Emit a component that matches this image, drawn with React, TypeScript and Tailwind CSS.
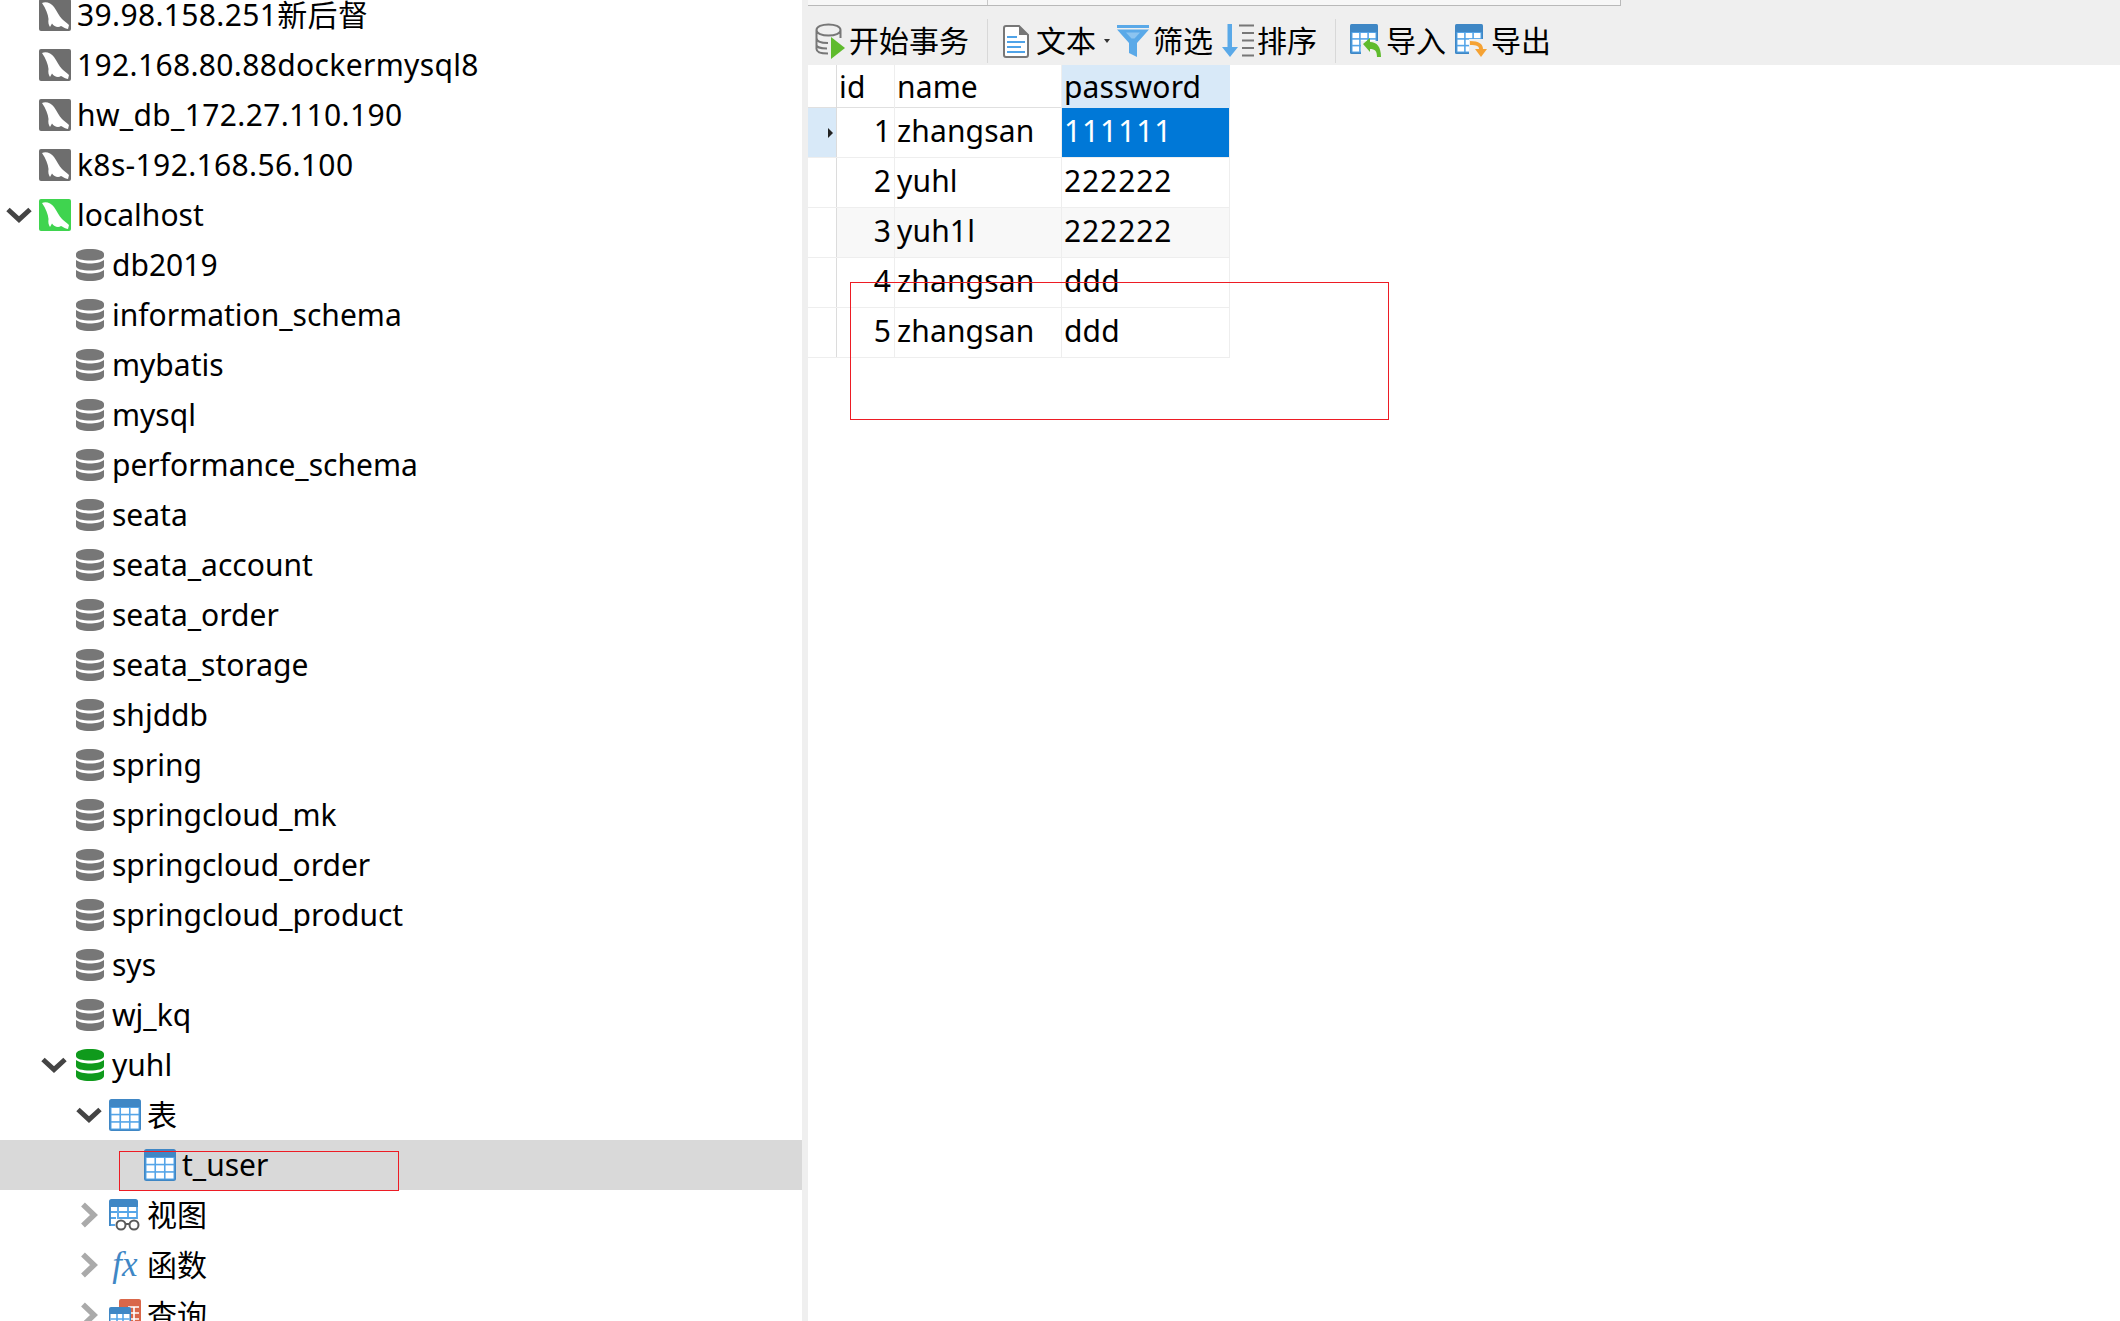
import { ReactNode } from "react"

const font = "[font-family:'Noto_Sans','Noto_Sans_CJK_SC',sans-serif]"

function Dolphin({ on }: { on?: boolean }) {
  return (
    <svg width="32" height="32" viewBox="0 0 32 32" className="shrink-0">
      <rect width="32" height="32" rx="2" fill={on ? "#3fd44f" : "#6e6e6e"} />
      <path
        d="M3 4C7 2 12 4 15 8C18 12 20 17 23 20C25 22 28 24 30 26L29 30C26 29.500 24 28 22 27C19 29 15 27.500 13 24.500L11 28C9.500 26 9 23 9.500 20C9 15 7 10 3 4Z"
        fill="#fff"
      />
    </svg>
  )
}

function DbIcon({ color = "#777777" }: { color?: string }) {
  return (
    <svg width="32" height="32" viewBox="-2 0 32 32" className="shrink-0">
      <path d="M0 5C0 2 6 0 14 0S28 2 28 5V7C28 10 22 11.500 14 11.500S0 10 0 7Z" fill={color} />
      <path d="M0 11C3 13.500 9 14.500 14 14.500S25 13.500 28 11V17C28 20 22 21.500 14 21.500S0 20 0 17Z" fill={color} />
      <path d="M0 21C3 23.500 9 24.500 14 24.500S25 23.500 28 21V27C28 30 22 32 14 32S0 30 0 27Z" fill={color} />
    </svg>
  )
}

function GridCells({ x, y, w, h }: { x: number; y: number; w: number; h: number }) {
  // three by three white cells on the blue sheet
  const cw = (w - 2 * 1.6) / 3
  const ch = (h - 2 * 1.6) / 3
  const cells = []
  for (let r = 0; r < 3; r++) {
    for (let c = 0; c < 3; c++) {
      cells.push(<rect key={`${r}-${c}`} x={x + c * (cw + 1.6)} y={y + r * (ch + 1.6)} width={cw} height={ch} fill="#fff" />)
    }
  }
  return <>{cells}</>
}

function TableIcon() {
  return (
    <svg width="32" height="32" viewBox="0 0 32 32" className="shrink-0">
      <rect width="32" height="32" rx="2.500" fill="#3f87c5" />
      <rect x="1.500" y="8" width="29" height="22.500" fill="#55a5e8" />
      <GridCells x={2.5} y={9} w={27} h={20.5} />
    </svg>
  )
}

function ViewIcon() {
  return (
    <svg width="32" height="32" viewBox="0 0 32 32" className="shrink-0">
      <path d="M0 2.500A2.500 2.500 0 0 1 2.500 0H26.500A2.500 2.500 0 0 1 29 2.500V8H0Z" fill="#3f87c5" />
      <path d="M1 8V26H6M10 13H28M10 19H28M1 13H8M1 19H7M9 8V20M19 8V20M28 8V20" stroke="#55a5e8" strokeWidth="1.800" fill="none" />
      <rect x="0" y="8" width="1.800" height="19" fill="#3f87c5" />
      <circle cx="12" cy="26" r="4.500" fill="#fff" stroke="#5a5a5a" strokeWidth="2" />
      <circle cx="25" cy="26" r="4.500" fill="#fff" stroke="#5a5a5a" strokeWidth="2" />
      <path d="M16 25H21" stroke="#5a5a5a" strokeWidth="2" />
    </svg>
  )
}

function QueryIcon() {
  return (
    <svg width="32" height="32" viewBox="0 0 32 32" className="shrink-0">
      <rect x="10" y="0" width="22" height="32" rx="2" fill="#d9674a" />
      <path d="M19 8H30M19 14H30M19 20H30M25 8V32" stroke="#fff" strokeWidth="1.600" fill="none" />
      <rect x="0" y="8" width="22" height="24" rx="2" fill="#3f87c5" />
      <path d="M1.500 15H20.500V32H1.500Z" fill="#fff" />
      <path d="M1.500 20H20.500M1.500 25H20.500M8 15V32M14 15V32" stroke="#55a5e8" strokeWidth="1.600" fill="none" />
    </svg>
  )
}

function FxIcon() {
  return (
    <span className="w-[32px] shrink-0 text-center text-[#3f87c5] italic text-[35px] leading-[32px] whitespace-nowrap [font-family:'Liberation_Serif',serif]">
      fx
    </span>
  )
}

function ChevronDown() {
  return (
    <svg width="26" height="16" viewBox="0 0 26 16">
      <path d="M2 2.500L13 12.500L24 2.500" stroke="#444444" strokeWidth="5" fill="none" />
    </svg>
  )
}

function ChevronRight() {
  return (
    <svg width="18" height="26" viewBox="0 0 18 26">
      <path d="M3 2.500L14 13L3 23.500" stroke="#aaaaaa" strokeWidth="5.500" fill="none" />
    </svg>
  )
}

const depthPad = ["pl-[4px]", "pl-[39px]", "pl-[74px]", "pl-[109px]"]

function TreeRow({
  depth,
  arrow,
  icon,
  label,
  selected,
  numeric,
}: {
  depth: number
  arrow?: "open" | "closed"
  icon: ReactNode
  label: string
  selected?: boolean
  numeric?: boolean
}) {
  return (
    <div className={`relative flex h-[50px] items-center ${depthPad[depth]} ${selected ? "bg-[#d9d9d9]" : ""}`}>
      <span className="flex w-[35px] shrink-0 items-center justify-center pr-[6px]">
        {arrow === "open" && <ChevronDown />}
        {arrow === "closed" && <ChevronRight />}
      </span>
      {icon}
      <span className={`ml-[6px] whitespace-nowrap text-[30px] leading-[50px] text-black ${numeric ? "tracking-[0.35px]" : "tracking-[0px]"}`}>
        {label}
      </span>
      {selected && <div className="absolute left-[119px] top-[11px] h-[40px] w-[280px] border border-[#ed1c24]" />}
    </div>
  )
}

const connections = ["39.98.158.251新后督", "192.168.80.88dockermysql8", "hw_db_172.27.110.190", "k8s-192.168.56.100"]

const databases = [
  "db2019",
  "information_schema",
  "mybatis",
  "mysql",
  "performance_schema",
  "seata",
  "seata_account",
  "seata_order",
  "seata_storage",
  "shjddb",
  "spring",
  "springcloud_mk",
  "springcloud_order",
  "springcloud_product",
  "sys",
  "wj_kq",
]

function Tree() {
  return (
    <div className="w-[802px] shrink-0 -mt-[10px] bg-white">
      {connections.map((c) => (
        <TreeRow key={c} depth={0} icon={<Dolphin />} label={c} numeric />
      ))}
      <TreeRow depth={0} arrow="open" icon={<Dolphin on />} label="localhost" />
      {databases.map((d) => (
        <TreeRow key={d} depth={1} icon={<DbIcon />} label={d} />
      ))}
      <TreeRow depth={1} arrow="open" icon={<DbIcon color="#0f9a1c" />} label="yuhl" />
      <TreeRow depth={2} arrow="open" icon={<TableIcon />} label="表" />
      <TreeRow depth={3} icon={<TableIcon />} label="t_user" selected />
      <TreeRow depth={2} arrow="closed" icon={<ViewIcon />} label="视图" />
      <TreeRow depth={2} arrow="closed" icon={<FxIcon />} label="函数" />
      <TreeRow depth={2} arrow="closed" icon={<QueryIcon />} label="查询" />
    </div>
  )
}

function TxIcon() {
  return (
    <svg width="30" height="36" viewBox="0 0 30 36" className="shrink-0">
      <path d="M1.500 7V26C1.500 29 6 30.500 13 30.500M1.500 7C1.500 3.500 7 1.500 13.500 1.500S25.500 3.500 25.500 7V15M1.500 7C1.500 10.500 7 12.500 13.500 12.500S25.500 10.500 25.500 7M1.500 15C1.500 18 6 20 13 20M1.500 22C1.500 24 6 25.500 12 25.500" stroke="#777777" strokeWidth="2" fill="none" />
      <path d="M16 14L30 25L16 36Z" fill="#5fbb2d" />
    </svg>
  )
}

function DocIcon() {
  return (
    <svg width="26" height="33" viewBox="0 0 26 33" className="shrink-0">
      <path d="M1 3A2 2 0 0 1 3 1H16L25 10V30A2 2 0 0 1 23 32H3A2 2 0 0 1 1 30Z" fill="#fff" stroke="#777777" strokeWidth="2" />
      <path d="M16 1V10H25Z" fill="#777777" />
      <path d="M4 12H14M4 17H22M4 22H18M4 27H22" stroke="#4fa3e8" strokeWidth="2.200" />
    </svg>
  )
}

function FilterIcon() {
  return (
    <svg width="32" height="32" viewBox="0 0 32 32" className="shrink-0">
      <path d="M0 0H32V3H0Z" fill="#5aa9e8" />
      <path d="M0 4.500H32L20 18V32L12 28V18Z" fill="#5aa9e8" />
      <path d="M9 7.500H23L17.500 13.500H14.500Z" fill="#8cc4f0" />
    </svg>
  )
}

function SortIcon() {
  return (
    <svg width="33" height="34" viewBox="0 0 33 34" className="shrink-0">
      <path d="M5.500 0H10V23H16L8 33L0 23H5.500Z" fill="#5aa9e8" />
      <path d="M17 1.500H32M20 9H32M20 16.500H32M20 24H32M20 31.500H32" stroke="#777777" strokeWidth="2" />
    </svg>
  )
}

function SheetArrowIcon({ kind }: { kind: "in" | "out" }) {
  return (
    <svg width="32" height="34" viewBox="0 0 32 34" className="shrink-0">
      <rect width="28" height="30" rx="1.500" fill="#3f87c5" />
      <rect x="1.500" y="8" width="25" height="20.500" fill="#55a5e8" />
      <GridCells x={2.5} y={9} w={23} h={18.5} />
      {kind === "in" ? (
        <>
          <rect x="11" y="17" width="21" height="17" fill="#efefef" />
          <path d="M13 20L20 14V18C27 18 31 23 31 33H27C27 27 25 25 20 25V28Z" fill="#5fbb2d" />
        </>
      ) : (
        <>
          <rect x="14" y="15" width="18" height="19" fill="#efefef" />
          <path d="M15 17V21C22 21 24 22 24 25H20L26 33L32 25H28C28 20 24 17 15 17Z" fill="#f5a233" />
        </>
      )}
    </svg>
  )
}

function ToolLabel({ children }: { children: string }) {
  return <span className="ml-[4px] whitespace-nowrap text-[30px] leading-[40px] text-black">{children}</span>
}

function ToolSep() {
  return <div className="h-[44px] w-px bg-[#d8d8d8]" />
}

function Toolbar() {
  return (
    <div className="flex h-[59px] items-center bg-[#efefef] pl-[7px] pt-[11px]">
      <TxIcon />
      <ToolLabel>开始事务</ToolLabel>
      <span className="ml-[18px]">
        <ToolSep />
      </span>
      <span className="ml-[15px]">
        <DocIcon />
      </span>
      <span className="ml-[3px]">
        <ToolLabel>文本</ToolLabel>
      </span>
      <svg width="6" height="4" viewBox="0 0 6 4" className="ml-[8px] mr-[7px] shrink-0">
        <path d="M0 0H6L3 4Z" fill="#333333" />
      </svg>
      <FilterIcon />
      <ToolLabel>筛选</ToolLabel>
      <span className="ml-[9px]">
        <SortIcon />
      </span>
      <span className="-ml-[2px]">
        <ToolLabel>排序</ToolLabel>
      </span>
      <span className="ml-[18px]">
        <ToolSep />
      </span>
      <span className="ml-[14px]">
        <SheetArrowIcon kind="in" />
      </span>
      <ToolLabel>导入</ToolLabel>
      <span className="ml-[9px]">
        <SheetArrowIcon kind="out" />
      </span>
      <ToolLabel>导出</ToolLabel>
    </div>
  )
}

const users = [
  { id: 1, name: "zhangsan", password: "111111" },
  { id: 2, name: "yuhl", password: "222222" },
  { id: 3, name: "yuh1l", password: "222222" },
  { id: 4, name: "zhangsan", password: "ddd" },
  { id: 5, name: "zhangsan", password: "ddd" },
]

function DataGrid() {
  const cols = "grid grid-cols-[29px_58px_167px_168px] w-[422px]"
  return (
    <div className="text-[30px] tracking-[0.15px] text-black">
      <div className={`${cols} h-[43px] border-b border-[#e0e0e0] leading-[44px]`}>
        <div className="border-r border-[#dcdcdc]" />
        <div className="border-r border-[#eeeeee] pl-[2px]">id</div>
        <div className="border-r border-[#eeeeee] pl-[2px]">name</div>
        <div className="bg-[#d8e9f8] pl-[2px]">password</div>
      </div>
      {users.map((u, i) => (
        <div key={u.id} className={`${cols} h-[50px] border-b border-[#eeeeee] leading-[46px] ${i === 2 ? "bg-[#f8f8f8]" : ""}`}>
          <div className={`flex items-center justify-end border-r border-[#dcdcdc] pr-[3px] ${i === 0 ? "bg-[#d8e9f8]" : "bg-white"}`}>
            {i === 0 && (
              <svg width="5" height="10" viewBox="0 0 5 10">
                <path d="M0 0L5 5L0 10Z" fill="#222222" />
              </svg>
            )}
          </div>
          <div className="border-r border-[#eeeeee] pr-[3px] text-right">{u.id}</div>
          <div className="border-r border-[#eeeeee] pl-[2px]">{u.name}</div>
          <div className={`border-r border-[#eeeeee] pl-[2px] ${i === 0 ? "bg-[#0078d7] text-white" : ""} ${i < 3 ? "tracking-[0.9px]" : ""}`}>
            {u.password}
          </div>
        </div>
      ))}
    </div>
  )
}

export default function App() {
  return (
    <div className={`flex h-[1321px] w-[2120px] overflow-hidden bg-white ${font}`}>
      <Tree />
      <div className="w-[6px] shrink-0 bg-[#efefef]" />
      <div className="relative flex-1">
        <div className="bg-[#efefef]">
          <div className="flex h-[6px] w-[813px] border-b border-r border-[#b9b9b9] bg-[#f7f7f7]">
            <div className="ml-[179px] border-l border-[#c8c8c8]" />
          </div>
          <Toolbar />
        </div>
        <DataGrid />
        <div className="absolute left-[42px] top-[282px] h-[138px] w-[539px] border border-[#ed1c24]" />
      </div>
    </div>
  )
}
